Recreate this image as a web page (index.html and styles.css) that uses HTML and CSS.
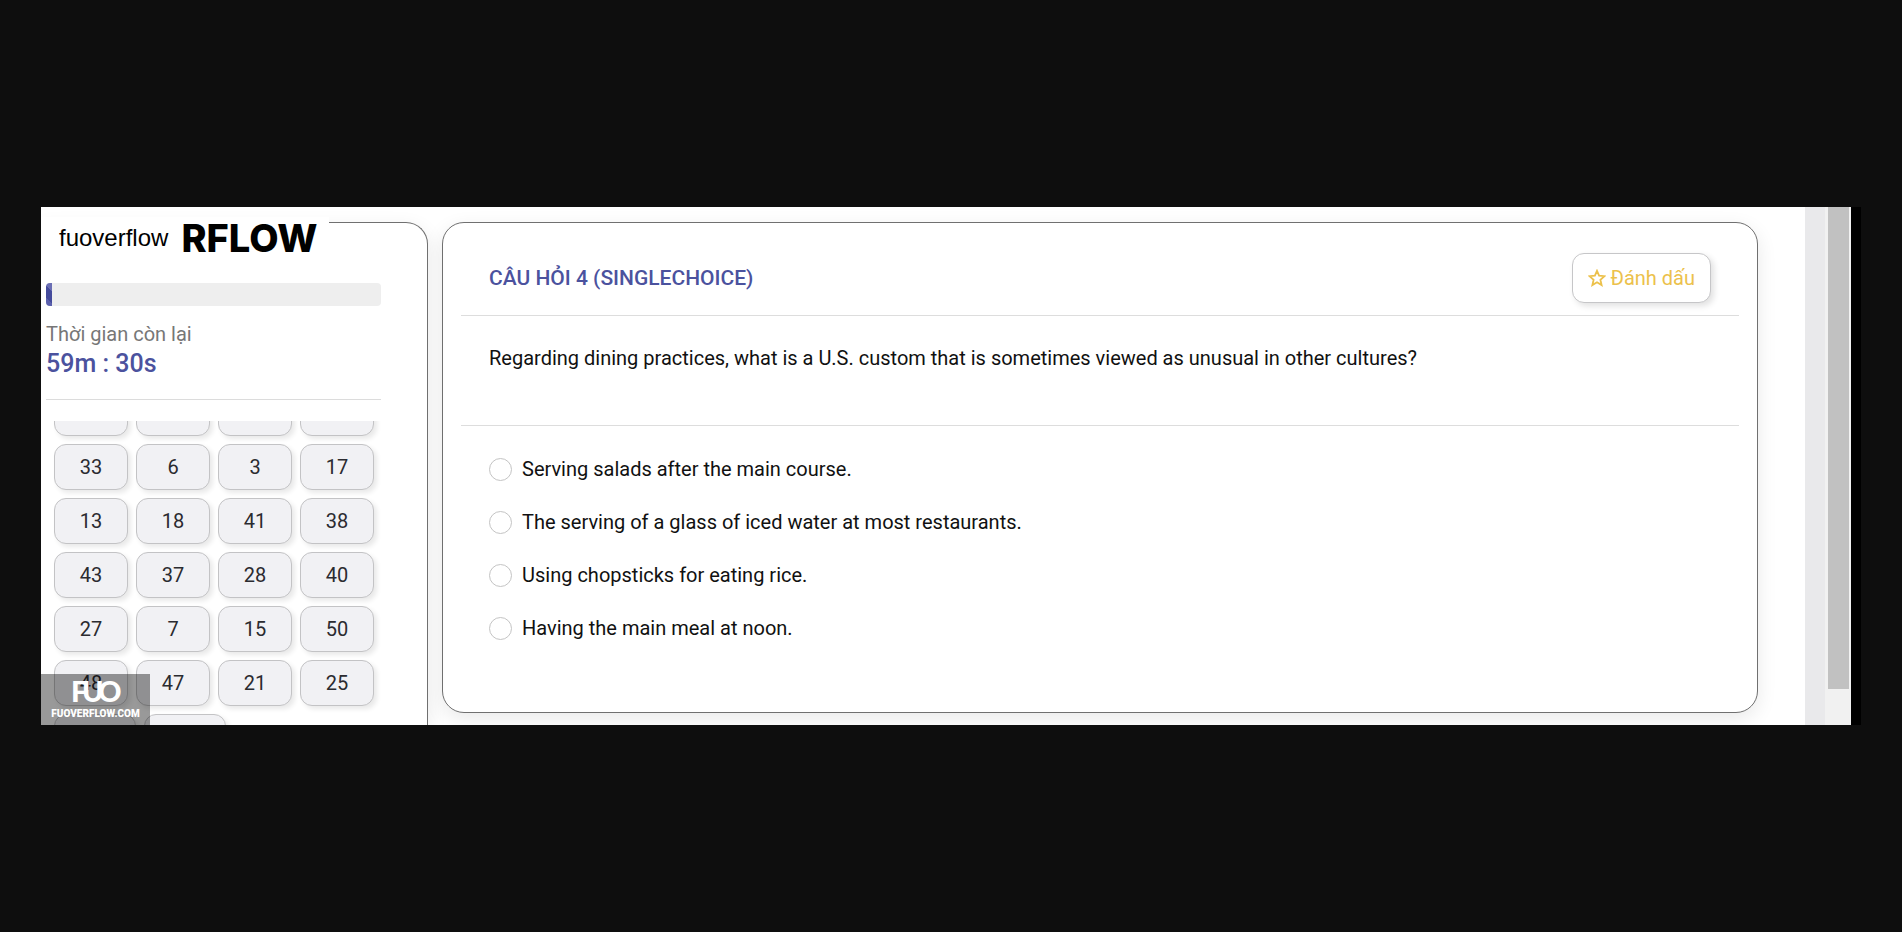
FILE: index.html
```html
<!DOCTYPE html>
<html lang="vi">
<head>
<meta charset="utf-8">
<meta name="viewport" content="width=device-width, initial-scale=1">
<title>Fuoverflow</title>
<link rel="stylesheet" href="styles.css">
</head>
<body>
<div class="screen">
  <aside class="sidebar">
    <div class="brand"><span class="brand-name">fuoverflow</span><span class="brand-logo">RFLOW</span></div>
    <div class="progress"><div class="progress-fill"></div></div>
    <p class="time-label">Thời gian còn lại</p>
    <p class="time-value">59m : 30s</p>
    <hr class="side-rule">
    <nav class="list" aria-label="Câu hỏi">
      <div class="numbers">
        <button class="number" aria-label="Câu hỏi"></button><button class="number" aria-label="Câu hỏi"></button><button class="number" aria-label="Câu hỏi"></button><button class="number" aria-label="Câu hỏi"></button>
        <button class="number">33</button><button class="number">6</button><button class="number">3</button><button class="number">17</button>
        <button class="number">13</button><button class="number">18</button><button class="number">41</button><button class="number">38</button>
        <button class="number">43</button><button class="number">37</button><button class="number">28</button><button class="number">40</button>
        <button class="number">27</button><button class="number">7</button><button class="number">15</button><button class="number">50</button>
        <button class="number">48</button><button class="number">47</button><button class="number">21</button><button class="number">25</button>
        <button class="number wide" aria-label="Câu hỏi"></button><button class="number wide" aria-label="Câu hỏi"></button>
      </div>
    </nav>
  </aside>

  <main class="card">
    <header class="card-head">
      <h1 class="title">CÂU HỎI 4 (SINGLECHOICE)</h1>
      <button class="mark">
        <svg class="star" viewBox="0 0 18 18" aria-hidden="true"><path d="M9 1.8l2.1 4.9 5.4.5-4.1 3.6 1.2 5.3L9 13.3l-4.6 2.8 1.2-5.3L1.5 7.2l5.4-.5z" fill="none" stroke="currentColor" stroke-width="1.8" stroke-linejoin="miter"/></svg>
        Đánh dấu
      </button>
    </header>
    <p class="question">Regarding dining practices, what is a U.S. custom that is sometimes viewed as unusual in other cultures?</p>
    <form class="answers">
      <label class="answer"><input class="radio" type="radio" name="answer">Serving salads after the main course.</label>
      <label class="answer"><input class="radio" type="radio" name="answer">The serving of a glass of iced water at most restaurants.</label>
      <label class="answer"><input class="radio" type="radio" name="answer">Using chopsticks for eating rice.</label>
      <label class="answer"><input class="radio" type="radio" name="answer">Having the main meal at noon.</label>
    </form>
  </main>

  <div class="gutter"></div>
  <div class="track"><div class="thumb"></div></div>

  <div class="watermark">
    <svg class="monogram" viewBox="0 0 50 24" role="img" aria-label="FUO"><text class="monogram-text" y="22" x="0 11 27">FUO</text></svg>
    <span class="site">FUOVERFLOW.COM</span>
  </div>
</div>
</body>
</html>
```
FILE: styles.css
```css
* { box-sizing: border-box; }

body {
  margin: 0;
  min-height: 100vh;
  padding: 0 41px;
  display: flex;
  align-items: center;
  background: #0e0e0e;
  color: #111;
  font-family: Roboto, "Liberation Sans", sans-serif;
  font-size: 20px;
  line-height: 24px;
}

p, h1 { margin: 0; }

button { font: inherit; cursor: pointer; }

.screen {
  position: relative;
  flex: 1;
  display: grid;
  grid-template-columns: 387px minmax(0, 1fr) 20px 26px;
  overflow: hidden;
  background: #fff;
  border-right: 10px solid #000;
}

.sidebar {
  position: relative;
  display: flex;
  flex-direction: column;
  margin-top: 15px;
  padding: 60px 46px 0 5px;
  border: 1px solid #707070;
  border-width: 1px 1px 0 0;
  border-radius: 0 22px 0 0;
  background: #fff;
  box-shadow: 0 6px 20px rgba(0, 0, 0, 0.09);
}

.brand {
  position: absolute;
  top: -6px;
  left: 0;
  width: 288px;
  padding-left: 18px;
  display: flex;
  align-items: center;
  gap: 13px;
  background: #fff;
}

.brand-name {
  color: #000;
  font-family: "Liberation Sans", sans-serif;
  font-size: 24px;
}

.brand-logo {
  color: #000;
  font-family: Inter, sans-serif;
  font-size: 38px;
  font-weight: 800;
  line-height: 42px;
}

.progress {
  height: 23px;
  flex: none;
  overflow: hidden;
  border-radius: 4px;
  background: #eee;
}

.progress-fill {
  width: 6px;
  height: 100%;
  background: linear-gradient(45deg, #5b60ad 30%, #454b9c 30%, #454b9c 70%, #6a6eb4 70%);
}

.time-label {
  margin-top: 16px;
  color: #777;
}

.time-value {
  margin-top: 4px;
  color: #4b529e;
  font-size: 25px;
  font-weight: 500;
  line-height: 28px;
}

.side-rule {
  width: 100%;
  margin: 21px 0;
  border: 0;
  border-top: 1px solid #dcdcdc;
}

.list {
  height: 0;
  flex-grow: 1;
  overflow: hidden;
}

.numbers {
  display: flex;
  flex-wrap: wrap;
  gap: 8px;
  margin-top: -31px;
  padding-left: 8px;
}

.number {
  width: 74px;
  height: 46px;
  padding: 0;
  border: 1px solid #c3c3c5;
  border-radius: 12px;
  background: #f1f1f4;
  color: #2b2b30;
  box-shadow: 3px 3px 5px rgba(0, 0, 0, 0.09);
}

.wide { width: 82px; }

.card {
  margin: 15px 47px 12px 14px;
  padding: 30px 18px 72px;
  border: 1px solid #707070;
  border-radius: 22px;
  background: #fff;
  box-shadow: 0 6px 20px rgba(0, 0, 0, 0.09);
}

.card-head {
  display: flex;
  align-items: center;
  justify-content: space-between;
  padding: 0 28px 12px;
  border-bottom: 1px solid #ddd;
}

.title {
  color: #4b529e;
  font-size: 21px;
  font-weight: 500;
}

.mark {
  display: flex;
  align-items: center;
  gap: 4px;
  padding: 12px 15px;
  border: 1px solid #c6c6c8;
  border-radius: 12px;
  background: #fff;
  color: #ecc14b;
  box-shadow: 3px 3px 6px rgba(0, 0, 0, 0.12);
}

.star {
  width: 18px;
  height: 18px;
}

.question {
  padding: 30px 28px 55px;
  border-bottom: 1px solid #ddd;
}

.answers {
  display: grid;
  gap: 29px;
  padding: 31px 28px 0;
}

.answer {
  display: flex;
  align-items: center;
  gap: 10px;
}

.radio {
  appearance: none;
  width: 23px;
  height: 23px;
  margin: 0;
  border: 1px solid #c4c4c4;
  border-radius: 50%;
  background: #fff;
}

.radio:checked { border: 7px solid #4b529e; }

.gutter { background: #e9e9eb; }

.track {
  padding: 0 2px 0 3px;
  background: #f1f1f1;
}

.thumb {
  height: 93%;
  background: #c1c1c1;
}

.watermark {
  position: absolute;
  left: 0;
  bottom: 0;
  width: 109px;
  height: 51px;
  padding-top: 6px;
  display: flex;
  flex-direction: column;
  align-items: center;
  background: rgba(0, 0, 0, 0.4);
  color: #fff;
}

.monogram {
  width: 50px;
  height: 24px;
  overflow: visible;
}

.monogram-text {
  fill: #fff;
  font-family: Lato, sans-serif;
  font-size: 29px;
  font-weight: 900;
}

.site {
  font-size: 10px;
  font-weight: 900;
  line-height: 20px;
}
```
